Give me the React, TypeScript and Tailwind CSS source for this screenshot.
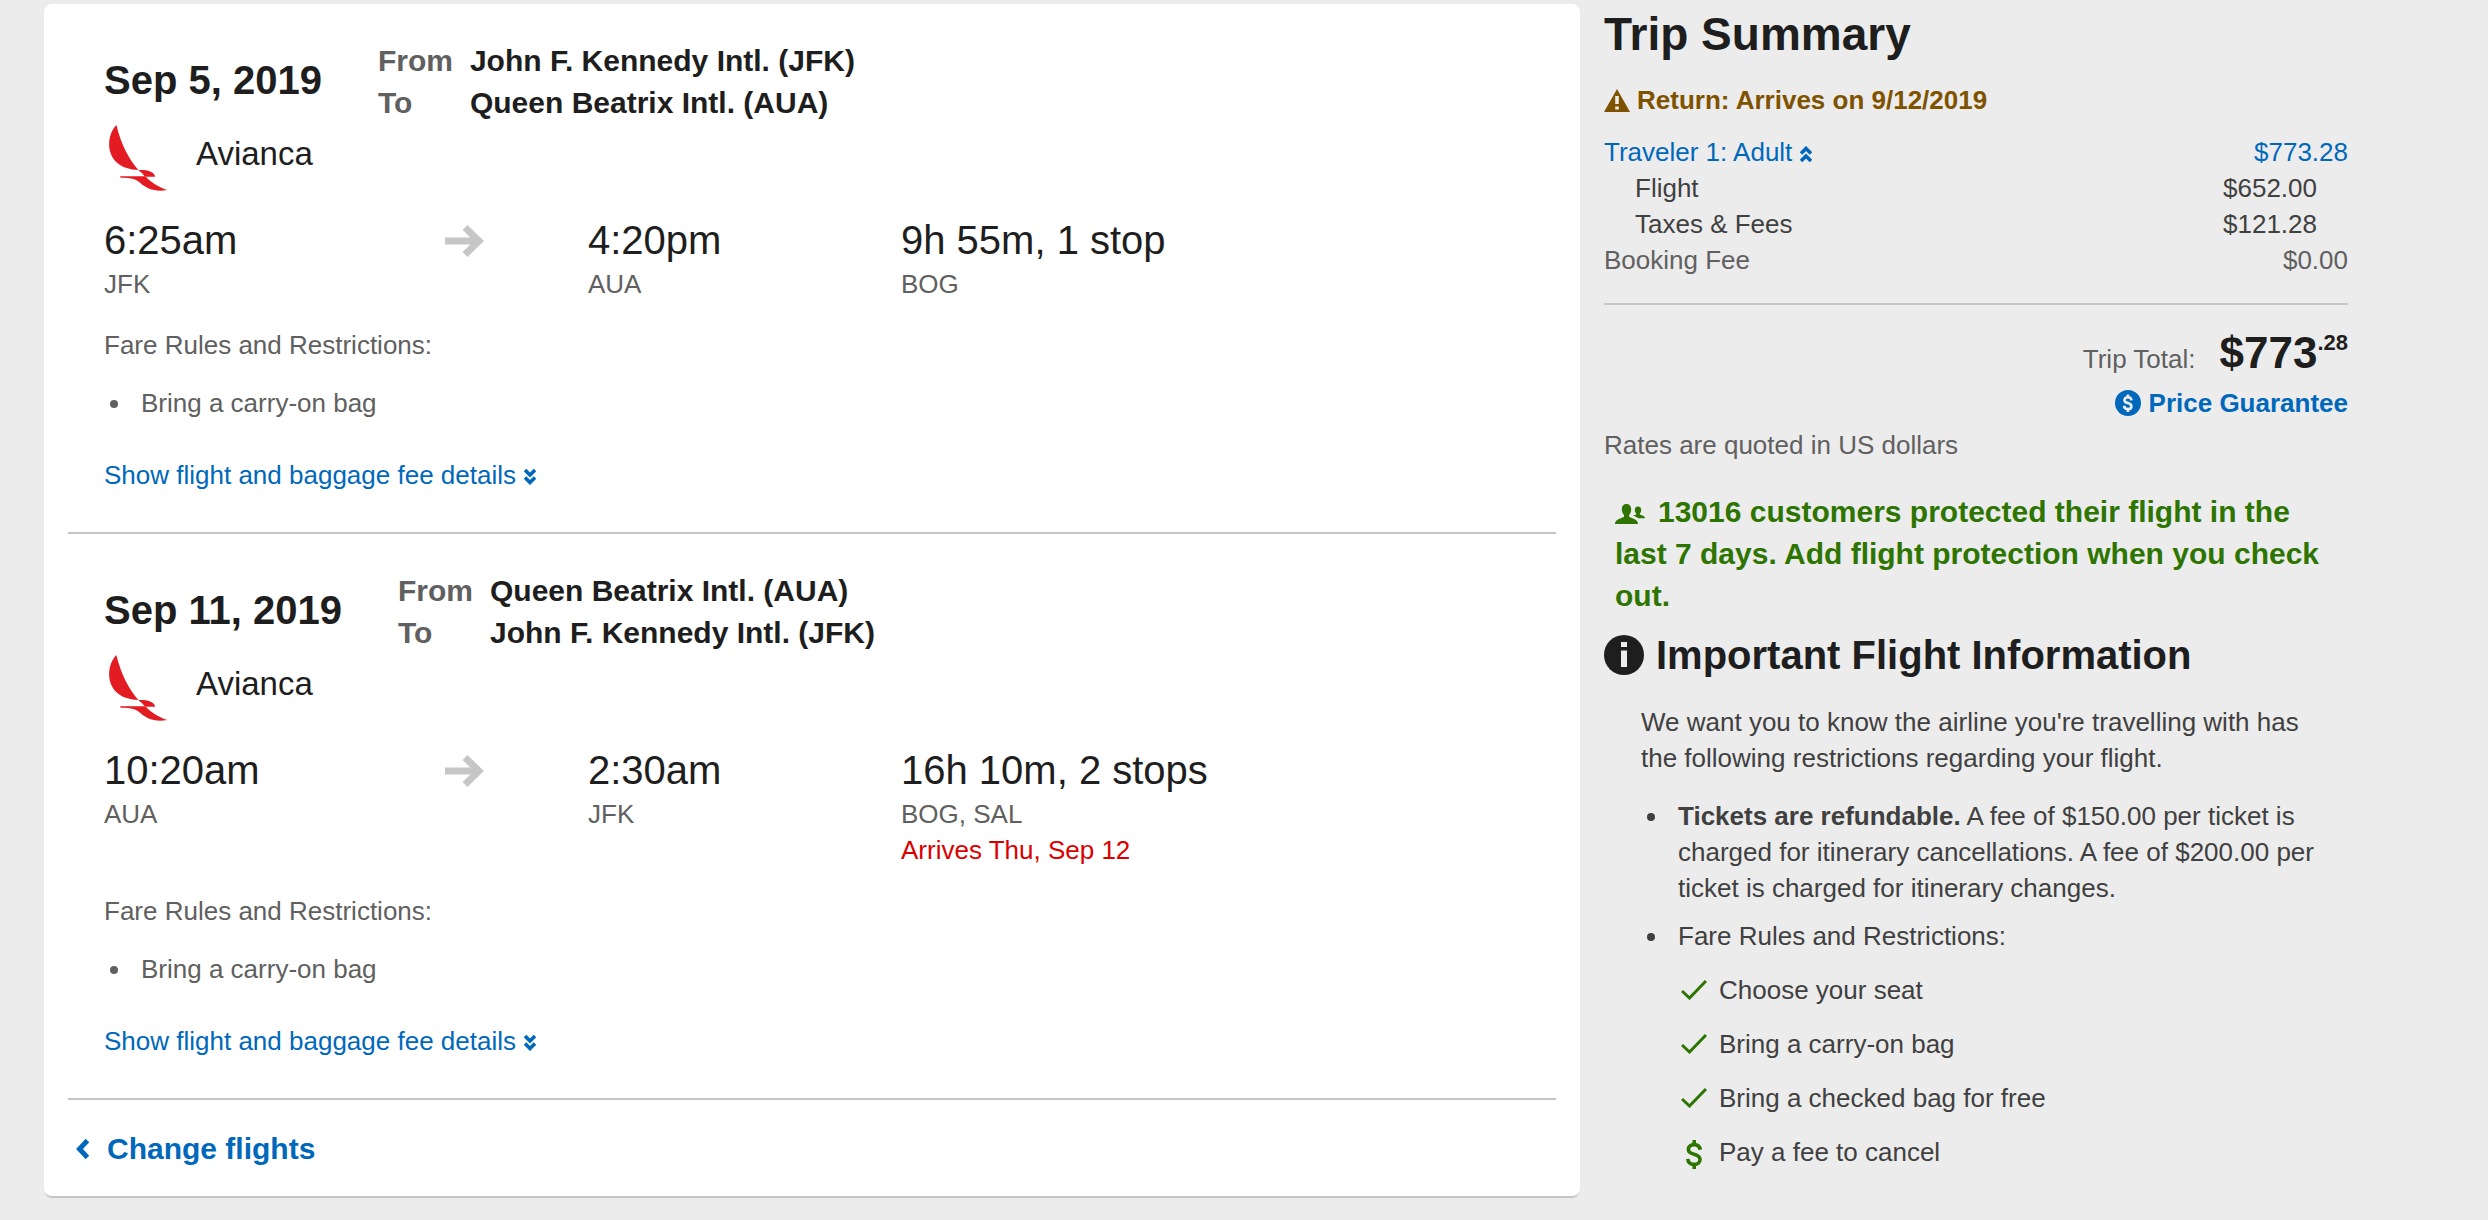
import type { ReactNode } from 'react';

interface FlightSlice {
  date: string;
  from: string;
  to: string;
  departTime: string;
  departCode: string;
  arriveTime: string;
  arriveCode: string;
  duration: string;
  stops: string;
  arrivalNote?: string;
}

const slices: FlightSlice[] = [
  {
    date: 'Sep 5, 2019',
    from: 'John F. Kennedy Intl. (JFK)',
    to: 'Queen Beatrix Intl. (AUA)',
    departTime: '6:25am',
    departCode: 'JFK',
    arriveTime: '4:20pm',
    arriveCode: 'AUA',
    duration: '9h 55m, 1 stop',
    stops: 'BOG',
  },
  {
    date: 'Sep 11, 2019',
    from: 'Queen Beatrix Intl. (AUA)',
    to: 'John F. Kennedy Intl. (JFK)',
    departTime: '10:20am',
    departCode: 'AUA',
    arriveTime: '2:30am',
    arriveCode: 'JFK',
    duration: '16h 10m, 2 stops',
    stops: 'BOG, SAL',
    arrivalNote: 'Arrives Thu, Sep 12',
  },
];

const fareRules = [
  { label: 'Choose your seat', icon: <CheckIcon /> },
  { label: 'Bring a carry-on bag', icon: <CheckIcon /> },
  { label: 'Bring a checked bag for free', icon: <CheckIcon /> },
  { label: 'Pay a fee to cancel', icon: <DollarIcon /> },
];

function AviancaLogo() {
  return (
    <svg viewBox="42 42 216 204" className="h-[68px] w-[72px] shrink-0 fill-[#e31b23]" aria-hidden="true">
      <path d="M79 45C61 64 54 93 59 120C67 157 97 178 145 180C117 147 94 105 79 45Z" />
      <path d="M145 180C172 179 190 184 195 198L163 198C159 192 153 187 145 180Z" />
      <path d="M90 199L195 199L195 201L168 201C184 217 206 232 232 240C196 246 172 238 152 220C139 208 126 203 92 203Z" />
    </svg>
  );
}

function ArrowIcon() {
  return (
    <svg viewBox="0 0 39 32" className="mt-[11px] h-8 w-[39px] fill-none stroke-[#c6c6c6] stroke-[7]" aria-hidden="true">
      <path d="M0 16H34" />
      <path d="M20 2.5L34 16L20 29.5" />
    </svg>
  );
}

function DoubleChevron({ up = false }: { up?: boolean }) {
  return (
    <svg
      viewBox="0 0 12 16"
      className={`ml-2 inline-block h-4 w-3 fill-none stroke-current stroke-[3.6] ${up ? 'rotate-180' : ''}`}
      aria-hidden="true"
    >
      <path d="M1 1L6 6L11 1M1 8.5L6 13.5L11 8.5" />
    </svg>
  );
}

function ChevronLeft() {
  return (
    <svg viewBox="0 0 13 20" className="h-5 w-[13px] fill-none stroke-current stroke-[5]" aria-hidden="true">
      <path d="M11.5 1.5L3.5 10L11.5 18.5" />
    </svg>
  );
}

function WarningIcon() {
  return (
    <svg viewBox="0 0 26 23" className="h-[23px] w-[26px]" aria-hidden="true">
      <path d="M13 0L26 23H0Z" fill="currentColor" />
      <path d="M11.2 7H14.8V15H11.2ZM11.2 17.5H14.8V20.5H11.2Z" fill="#ececec" />
    </svg>
  );
}

function DollarShape() {
  return (
    <>
      <path d="M14.2 9.8C13.8 6.4 11.4 4.6 8.2 4.6C4.8 4.6 2.4 6.4 2.4 9.4C2.4 15.8 14 12.6 14 19.4C14 22.6 11.6 24.4 8.2 24.4C4.4 24.4 2 22.4 1.8 18.8" />
      <path d="M8.2 0V5M8.2 24V29" />
    </>
  );
}

function GuaranteeIcon() {
  return (
    <svg viewBox="0 0 26 26" className="h-[26px] w-[26px]" aria-hidden="true">
      <circle cx="13" cy="13" r="13" fill="currentColor" />
      <g transform="translate(8 4.5) scale(0.6)" fill="none" stroke="#ececec" strokeWidth="4.4">
        <DollarShape />
      </g>
    </svg>
  );
}

function DollarIcon() {
  return (
    <svg viewBox="0 0 16 29" className="mt-1 h-[29px] w-4 fill-none stroke-[#2d7500] stroke-[3.6]" aria-hidden="true">
      <DollarShape />
    </svg>
  );
}

function CheckIcon() {
  return (
    <svg viewBox="0 0 26 20" className="h-5 w-[26px] fill-none stroke-[#2d7500] stroke-3" aria-hidden="true">
      <path d="M1 11L8.5 18L25 1" />
    </svg>
  );
}

function PeopleIcon() {
  return (
    <svg viewBox="0 0 30 20" className="mr-[13px] inline-block h-5 w-[30px] fill-current" aria-hidden="true">
      <path d="M11.5 0C14.6 0 16.2 2 16.2 5.2C16.2 8 15 10 14.2 11V13C18 14.6 23 15.5 23 20H0C0 15.5 5 14.6 9 13V11C8 10 6.8 8 6.8 5.2C6.8 2 8.4 0 11.5 0Z" />
      <path d="M23 2.4C25.2 2.4 26.2 3.8 26.2 5.8C26.2 7.6 25.6 8.8 24.8 9.6V10.6C27 11.6 30 12 30 14.2H23.4C21.8 12.8 20 12.2 18 11.4C19.4 11.2 20.6 11 21.2 10.6V9.6C20.4 8.8 19.8 7.6 19.8 5.8C19.8 3.8 20.8 2.4 23 2.4Z" />
    </svg>
  );
}

function InfoIcon() {
  return (
    <svg viewBox="0 0 40 40" className="h-10 w-10 shrink-0" aria-hidden="true">
      <circle cx="20" cy="20" r="20" fill="currentColor" />
      <path d="M17 7H23V12H17ZM17 15.5H23V32H17Z" fill="#ececec" />
    </svg>
  );
}

function Bullet({ children }: { children: ReactNode }) {
  return (
    <li className="flex">
      <span className="ml-1.5 mt-[15px] mr-[23px] h-2 w-2 shrink-0 rounded-full bg-current" />
      <div>{children}</div>
    </li>
  );
}

function FlightCard({ slice }: { slice: FlightSlice }) {
  return (
    <section className="border-b-2 border-[#c6c6c6] px-9 pt-9 pb-[39px] text-[#606060]">
      <div className="flex items-start gap-14">
        <h2 className="pt-3 text-[40px] leading-14 font-bold text-[#1e1e1e]">{slice.date}</h2>
        <dl className="grid grid-cols-[92px_auto] text-[30px] leading-[42px] font-bold">
          <dt>From</dt>
          <dd className="text-[#1e1e1e]">{slice.from}</dd>
          <dt>To</dt>
          <dd className="text-[#1e1e1e]">{slice.to}</dd>
        </dl>
      </div>

      <div className="flex gap-5">
        <AviancaLogo />
        <span className="pt-2 text-[33px] leading-11 text-[#1e1e1e]">Avianca</span>
      </div>

      <div className="mt-[22px] grid grid-cols-[341fr_143fr_313fr_619fr]">
        <div>
          <div className="text-[40px] leading-[52px] text-[#1e1e1e]">{slice.departTime}</div>
          <div>{slice.departCode}</div>
        </div>
        <ArrowIcon />
        <div>
          <div className="text-[40px] leading-[52px] text-[#1e1e1e]">{slice.arriveTime}</div>
          <div>{slice.arriveCode}</div>
        </div>
        <div>
          <div className="text-[40px] leading-[52px] text-[#1e1e1e]">{slice.duration}</div>
          <div>{slice.stops}</div>
          {slice.arrivalNote && <div className="text-[#db0000]">{slice.arrivalNote}</div>}
        </div>
      </div>

      <p className="mt-[25px]">Fare Rules and Restrictions:</p>
      <ul className="mt-[22px]">
        <Bullet>Bring a carry-on bag</Bullet>
      </ul>
      <a href="#details" className="mt-9 block text-[#0068bb]">
        Show flight and baggage fee details
        <DoubleChevron />
      </a>
    </section>
  );
}

function TripSummary() {
  return (
    <aside className="pt-0.5 text-[#606060]">
      <h1 className="text-[46px] leading-14 font-bold text-[#1e1e1e]">Trip Summary</h1>
      <p className="mt-5 flex items-center gap-[7px] font-bold text-[#7f5200]">
        <WarningIcon />
        Return: Arrives on 9/12/2019
      </p>

      <table className="mt-4 w-full">
        <tbody>
          <tr className="text-[#0068bb]">
            <td className="p-0">
              <a href="#traveler">
                Traveler 1: Adult
                <DoubleChevron up />
              </a>
            </td>
            <td className="p-0 text-right">$773.28</td>
          </tr>
          <tr className="text-[#404040]">
            <td className="pl-[31px]">Flight</td>
            <td className="pr-[31px] text-right">$652.00</td>
          </tr>
          <tr className="text-[#404040]">
            <td className="pl-[31px]">Taxes &amp; Fees</td>
            <td className="pr-[31px] text-right">$121.28</td>
          </tr>
          <tr>
            <td className="p-0">Booking Fee</td>
            <td className="p-0 text-right">$0.00</td>
          </tr>
        </tbody>
      </table>

      <div className="mt-[25px] border-t-2 border-[#c6c6c6] pt-5">
        <div className="flex items-baseline justify-end gap-6">
          <span>Trip Total:</span>
          <span className="flex items-start text-[44px] leading-14 font-bold text-[#1e1e1e]">
            $773
            <span className="pt-1.5 text-[22px] leading-6">.28</span>
          </span>
        </div>
        <a href="#guarantee" className="mt-1 flex items-center justify-end gap-2 font-bold text-[#0068bb]">
          <GuaranteeIcon />
          Price Guarantee
        </a>
        <p className="mt-1.5">Rates are quoted in US dollars</p>
      </div>

      <p className="mt-7 px-[11px] text-[30px] leading-[42px] font-bold text-[#2d7500]">
        <PeopleIcon />
        13016 customers protected their flight in the last 7 days. Add flight protection when you check out.
      </p>

      <div className="mt-3 flex items-center gap-3 text-[#1e1e1e]">
        <InfoIcon />
        <h2 className="text-[40px] leading-[52px] font-bold">Important Flight Information</h2>
      </div>

      <div className="px-[37px] pt-[23px] text-[#404040]">
        <p>We want you to know the airline you're travelling with has the following restrictions regarding your flight.</p>
        <ul className="-mr-3 mt-[22px] flex flex-col gap-3">
          <Bullet>
            <strong>Tickets are refundable.</strong> A fee of $150.00 per ticket is charged for itinerary cancellations. A
            fee of $200.00 per ticket is charged for itinerary changes.
          </Bullet>
          <Bullet>
            Fare Rules and Restrictions:
            <ul className="mt-[18px] flex flex-col gap-[18px]">
              {fareRules.map((rule) => (
                <li key={rule.label} className="flex h-9 items-center gap-[9px]">
                  <span className="flex w-8 justify-center">{rule.icon}</span>
                  {rule.label}
                </li>
              ))}
            </ul>
          </Bullet>
        </ul>
      </div>
    </aside>
  );
}

export default function App() {
  return (
    <div className="min-h-screen bg-[#ececec] pt-1 pr-[140px] pl-11 font-['Helvetica_Neue','Liberation_Sans',Arial,sans-serif] text-[26px] leading-9">
      <div className="grid grid-cols-[1536fr_744fr] items-start gap-6">
        <main className="rounded-lg border-b-2 border-[#c6c6c6] bg-white px-6">
          {slices.map((slice) => (
            <FlightCard key={slice.date} slice={slice} />
          ))}
          <a
            href="#change"
            className="flex items-center gap-[18px] pt-7 pb-[26px] pl-2 text-[30px] leading-[42px] font-bold text-[#0068bb]"
          >
            <ChevronLeft />
            Change flights
          </a>
        </main>
        <TripSummary />
      </div>
    </div>
  );
}
